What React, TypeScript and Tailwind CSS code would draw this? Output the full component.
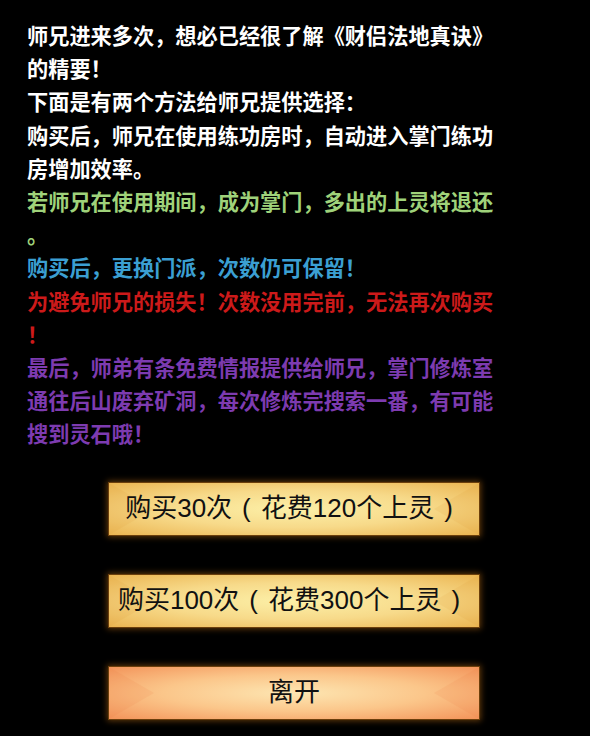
import React from 'react';

const lines: { text: string; color: string }[] = [
  { text: '师兄进来多次，想必已经很了解《财侣法地真诀》的精要！', color: 'text-white' },
  { text: '下面是有两个方法给师兄提供选择：', color: 'text-white' },
  { text: '购买后，师兄在使用练功房时，自动进入掌门练功房增加效率。', color: 'text-white' },
  { text: '若师兄在使用期间，成为掌门，多出的上灵将退还。', color: 'text-[#9fd27a]' },
  { text: '购买后，更换门派，次数仍可保留！', color: 'text-[#3b9fd2]' },
  { text: '为避免师兄的损失！次数没用完前，无法再次购买！', color: 'text-[#cc1a1a]' },
  { text: '最后，师弟有条免费情报提供给师兄，掌门修炼室通往后山废弃矿洞，每次修炼完搜索一番，有可能搜到灵石哦！', color: 'text-[#7d3bb0]' },
];

function GoldButton({ label, leave }: { label: React.ReactNode; leave?: boolean }) {
  return (
    <button
      className={
        'relative w-[370px] h-[52px] flex items-center justify-center overflow-hidden text-[26px] text-[#111] ' +
        'shadow-[0_0_0_1px_#6b3f0c,0_0_6px_2px_rgba(190,110,20,0.5)] ' +
        (leave
          ? 'bg-[radial-gradient(ellipse_at_center,#fde6b2_0%,#fbc68a_50%,#f3945a_100%)]'
          : 'bg-[radial-gradient(ellipse_at_center,#fcf0a8_0%,#f7da8a_50%,#ebb552_100%)]')
      }
      style={{ fontFamily: '"Liberation Sans", "Noto Sans CJK SC", sans-serif' }}
    >
      {/* faint diamond facets */}
      <svg className="absolute inset-0 w-full h-full opacity-10" viewBox="0 0 370 52" preserveAspectRatio="none">
        <path d="M0 0 L45 26 L0 52 Z" fill={leave ? '#e9703a' : '#d9902a'} />
        <path d="M370 0 L325 26 L370 52 Z" fill={leave ? '#e9703a' : '#d9902a'} />
      </svg>
      <span className="relative flex items-center">{label}</span>
    </button>
  );
}

function Paren({ ch }: { ch: string }) {
  return <span className="mx-[10px]">{ch}</span>;
}

export default function App() {
  return (
    <div
      className="w-[590px] h-[736px] bg-black overflow-hidden"
      style={{ fontFamily: '"Noto Sans CJK SC", "Noto Sans", sans-serif' }}
    >
      <div className="pl-[27px] pt-[18px] w-[500px]">
        {lines.map((l, i) => (
          <p key={i} className={'text-[21.2px] leading-[33.2px] font-bold [line-break:anywhere] ' + l.color}>
            {l.text}
          </p>
        ))}
      </div>
      <div className="flex flex-col items-center gap-[40px] mt-[33px] pr-[2px]">
        <GoldButton label={<>购买30次<Paren ch="(" />花费120个上灵<Paren ch=")" /></>} />
        <GoldButton label={<>购买100次<Paren ch="(" />花费300个上灵<Paren ch=")" /></>} />
        <GoldButton label="离开" leave />
      </div>
    </div>
  );
}
